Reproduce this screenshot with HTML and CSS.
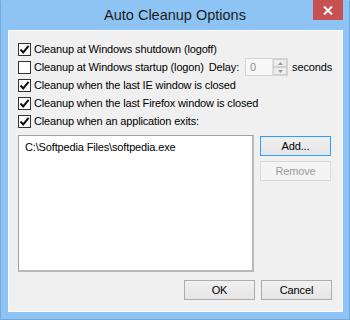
FILE: index.html
```html
<!DOCTYPE html>
<html lang="en">
<head>
    <meta charset="UTF-8">
    <title>Auto Cleanup Options</title>
    <link rel="stylesheet" href="styles.css">
</head>
<body>
    <div class="window">
        <div class="titlebar">
            <span class="title">Auto Cleanup Options</span>
            <div class="close-btn">
                <svg width="10" height="9" viewBox="0 0 10 9"><path d="M1 0.5 L9 8.5 M9 0.5 L1 8.5" stroke="#fff" stroke-width="2"/></svg>
            </div>
        </div>

        <div class="client">
            <div class="option">
                <span class="check on"><svg width="11" height="11" viewBox="0 0 11 11"><path d="M1.5 5.5 L4.2 8.4 L9.6 1.8" fill="none" stroke="#111" stroke-width="2"/></svg></span>
                <span>Cleanup at Windows shutdown (logoff)</span>
            </div>
            <div class="option">
                <span class="check"></span>
                <span>Cleanup at Windows startup (logon)</span>
                <span class="delay-label">Delay:</span>
                <div class="spinner">
                    <span class="spin-value">0</span>
                    <div class="spin-buttons">
                        <div class="spin-btn"><svg width="5" height="3" viewBox="0 0 5 3"><path d="M0 3 L2.5 0 L5 3 Z" fill="#9a9a9a"/></svg></div>
                        <div class="spin-btn"><svg width="5" height="3" viewBox="0 0 5 3"><path d="M0 0 L2.5 3 L5 0 Z" fill="#9a9a9a"/></svg></div>
                    </div>
                </div>
                <span class="seconds">seconds</span>
            </div>
            <div class="option">
                <span class="check on"><svg width="11" height="11" viewBox="0 0 11 11"><path d="M1.5 5.5 L4.2 8.4 L9.6 1.8" fill="none" stroke="#111" stroke-width="2"/></svg></span>
                <span>Cleanup when the last IE window is closed</span>
            </div>
            <div class="option">
                <span class="check on"><svg width="11" height="11" viewBox="0 0 11 11"><path d="M1.5 5.5 L4.2 8.4 L9.6 1.8" fill="none" stroke="#111" stroke-width="2"/></svg></span>
                <span>Cleanup when the last Firefox window is closed</span>
            </div>
            <div class="option">
                <span class="check on"><svg width="11" height="11" viewBox="0 0 11 11"><path d="M1.5 5.5 L4.2 8.4 L9.6 1.8" fill="none" stroke="#111" stroke-width="2"/></svg></span>
                <span>Cleanup when an application exits:</span>
            </div>

            <div class="list-area">
                <div class="listbox">
                    <div class="list-item">C:\Softpedia Files\softpedia.exe</div>
                </div>
                <div class="side-buttons">
                    <div class="btn default">Add...</div>
                    <div class="btn disabled">Remove</div>
                </div>
            </div>

            <div class="footer">
                <div class="btn">OK</div>
                <div class="btn">Cancel</div>
            </div>
        </div>
    </div>
</body>
</html>
```

FILE: styles.css
```css
body {
    margin: 0;
    font-family: "Liberation Sans", Arial, sans-serif;
    font-size: 11px;
    letter-spacing: -0.15px;
    color: #000;
}
.window {
    width: 350px;
    height: 320px;
    box-sizing: border-box;
    background-color: #8dc4f4;
    border: 1px solid #73a8d8;
    border-top-color: #8dc4f4;
    display: flex;
    flex-direction: column;
}
.titlebar {
    position: relative;
    height: 29px;
    display: flex;
    align-items: center;
    justify-content: center;
}
.title {
    font-size: 14.5px;
    letter-spacing: 0;
    color: #1c1c1c;
    margin-top: -1px;
}
.close-btn {
    position: absolute;
    top: -1px;
    right: 6px;
    width: 30px;
    height: 20px;
    background-color: #c75050;
    display: flex;
    align-items: center;
    justify-content: center;
}
.client {
    margin: 0 6px 7px 7px;
    flex: 1;
    background-color: #f0f0f0;
    border: 1px solid #fbfbfb;
    padding: 9px 10px 11px 9px;
    display: flex;
    flex-direction: column;
}
.option {
    height: 18px;
    display: flex;
    align-items: center;
    white-space: nowrap;
}
.check {
    width: 11px;
    height: 11px;
    border: 1px solid #333;
    background-color: #fff;
    margin-right: 3px;
    display: flex;
    flex-shrink: 0;
}
.delay-label {
    margin-left: 5px;
}
.spinner {
    margin-left: 6px;
    width: 45px;
    height: 16px;
    border: 1px solid #d4d4d4;
    background-color: #f7f7f7;
    display: flex;
    justify-content: space-between;
}
.spin-value {
    color: #8d8d8d;
    padding-left: 4px;
    line-height: 16px;
}
.spin-buttons {
    width: 14px;
    display: flex;
    flex-direction: column;
    border-left: 1px solid #e0e0e0;
}
.spin-btn {
    flex: 1;
    border: 1px solid #d0d0d0;
    background-color: #ededed;
    display: flex;
    align-items: center;
    justify-content: center;
}
.seconds {
    margin-left: 4px;
}
.list-area {
    margin-top: 5px;
    display: flex;
    gap: 6px;
}
.listbox {
    width: 236px;
    height: 137px;
    box-sizing: border-box;
    background-color: #fff;
    border: 1px solid #a0a0a0;
    border-right-width: 2px;
    border-bottom-width: 2px;
    border-right-color: #b9b9b9;
    border-bottom-color: #b9b9b9;
    padding: 4px 6px;
}
.list-item {
    line-height: 14px;
}
.side-buttons {
    display: flex;
    flex-direction: column;
    gap: 5px;
    margin-top: 1px;
}
.btn {
    width: 71px;
    height: 20px;
    box-sizing: border-box;
    border: 1px solid #acacac;
    background: linear-gradient(#f0f0f0, #e5e5e5);
    display: flex;
    align-items: center;
    justify-content: center;
}
.btn.default {
    border-color: #3c9bf0;
    box-shadow: inset 0 0 0 1px #dbeeff;
}
.btn.disabled {
    border-color: #d9d9d9;
    background: #f4f4f4;
    color: #9b9b9b;
}
.footer {
    margin-top: auto;
    display: flex;
    justify-content: flex-end;
    gap: 6px;
}
```
